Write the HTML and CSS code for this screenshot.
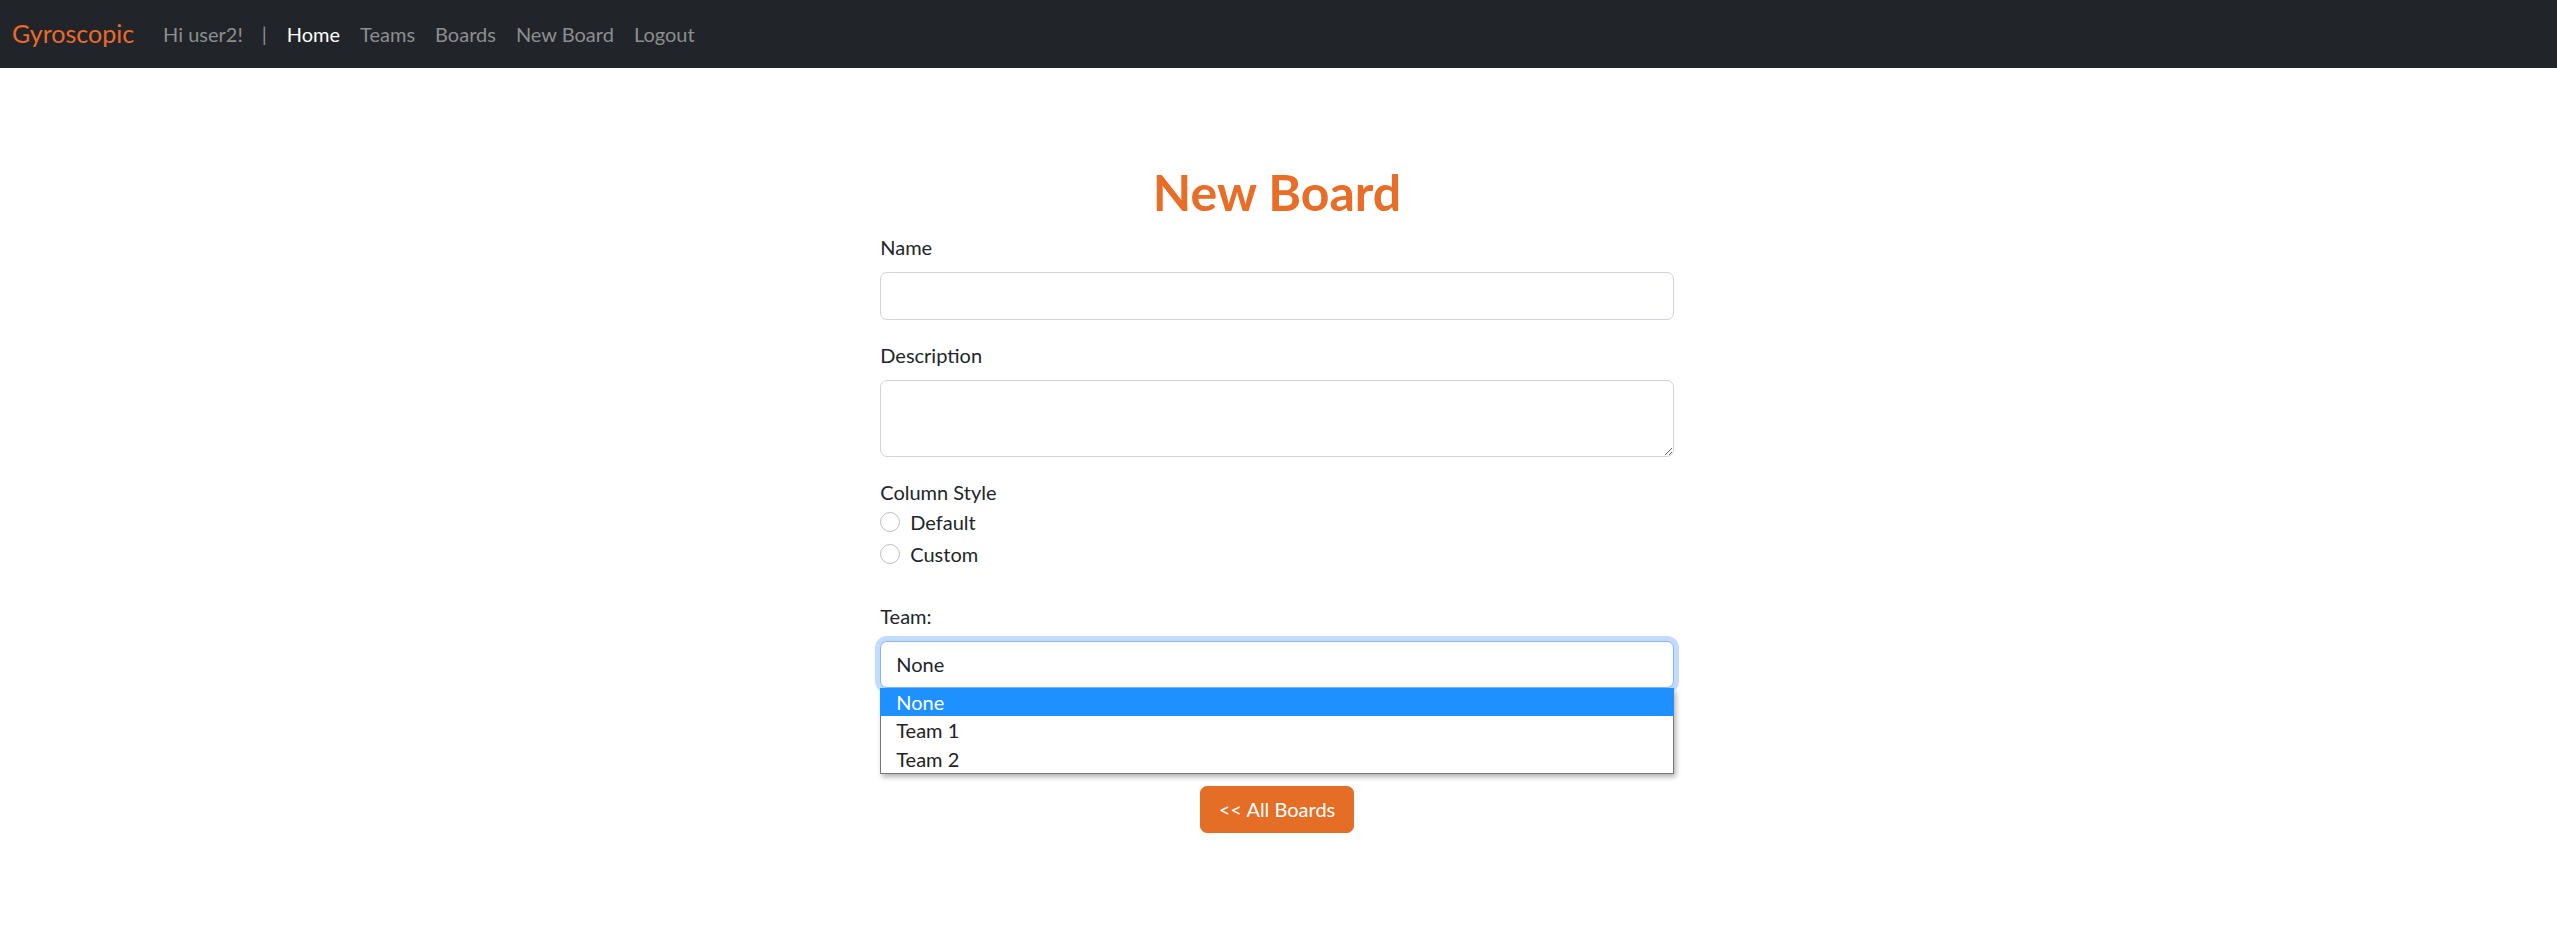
FILE: index.html
```html
<!DOCTYPE html>
<html lang="en">
<head>
<meta charset="utf-8">
<title>New Board</title>
<link rel="stylesheet" href="styles.css">
</head>
<body>
<nav class="navbar">
  <a class="brand" href="#">Gyroscopic</a>
  <span class="nav-text">Hi user2!</span>
  <span class="nav-text nav-sep">|</span>
  <a class="nav-link active" href="#">Home</a>
  <a class="nav-link" href="#">Teams</a>
  <a class="nav-link" href="#">Boards</a>
  <a class="nav-link" href="#">New Board</a>
  <a class="nav-link" href="#">Logout</a>
</nav>
<main class="page">
  <h1 class="title">New Board</h1>
  <form class="board-form">
    <div class="field">
      <label class="label" for="name">Name</label>
      <input class="control" id="name" type="text">
    </div>
    <div class="field">
      <label class="label" for="desc">Description</label>
      <textarea class="control textarea" id="desc"></textarea>
    </div>
    <div class="field-group">
      <div class="label label-tight">Column Style</div>
      <label class="check"><span class="radio"></span><span>Default</span></label>
      <label class="check"><span class="radio"></span><span>Custom</span></label>
    </div>
    <div class="field field-team">
      <label class="label">Team:</label>
      <div class="select-wrap">
        <div class="control select">None</div>
        <ul class="dropdown">
          <li class="option selected">None</li>
          <li class="option">Team 1</li>
          <li class="option">Team 2</li>
        </ul>
      </div>
    </div>
    <div class="actions">
      <a class="btn" href="#">&lt;&lt; All Boards</a>
    </div>
  </form>
</main>
</body>
</html>
```
FILE: styles.css
```css
* { box-sizing: border-box; }
body {
  margin: 0;
  font-family: "Lato", "Open Sans", sans-serif;
  font-size: 20px;
  line-height: 1.5;
  color: #212529;
  background: #fff;
}
.navbar {
  height: 68px;
  background: #212529;
  display: flex;
  align-items: center;
  padding: 0 12px;
}
.brand {
  color: #eb6a2b;
  font-size: 25px;
  text-decoration: none;
  margin-right: 19px;
}
.nav-text {
  color: #8c8e91;
  padding: 0 10px;
}
.nav-sep { padding: 0 10px 0 9px; }
.nav-link {
  color: #8c8e91;
  text-decoration: none;
  padding: 0 10px;
}
.nav-link.active { color: #fff; }
.page {
  width: 796.5px;
  padding-right: 3px;
  margin: 94px auto 0;
}
.title {
  margin: 0 0 10px;
  text-align: center;
  font-size: 50px;
  line-height: 60px;
  font-weight: 700;
  color: #e86d27;
}
.field { margin-bottom: 20px; }
.label {
  display: block;
  line-height: 30px;
  margin-bottom: 10px;
}
.label-tight { margin-bottom: 0; }
.control {
  display: block;
  width: 100%;
  height: 47.5px;
  padding: 7.5px 15px;
  font: inherit;
  color: #212529;
  background: #fff;
  border: 1px solid #ced4da;
  border-radius: 7px;
}
.textarea {
  height: 77px;
  resize: vertical;
}
.field-group { margin-bottom: 31.5px; }
.check {
  display: flex;
  align-items: flex-start;
  min-height: 30px;
  margin-bottom: 2.5px;
  line-height: 30px;
}
.radio {
  width: 20px;
  height: 20px;
  margin-top: 5px;
  margin-right: 10px;
  border: 1px solid rgba(0,0,0,.25);
  border-radius: 50%;
  flex: none;
}
.field-team { margin-bottom: 97.5px; }
.select-wrap { position: relative; }
.select {
  border-color: #86b7fe;
  box-shadow: 0 0 0 5px rgba(13,110,253,.25);
}
.dropdown {
  position: absolute;
  top: 100%;
  left: 0;
  right: 0;
  margin: 0;
  padding: 0;
  list-style: none;
  background: #fff;
  border: 1px solid #767676;
  border-top: none;
  box-shadow: 2px 3px 5px rgba(0,0,0,.3);
  z-index: 2;
}
.option {
  height: 28.3px;
  line-height: 28.3px;
  padding-left: 15px;
  color: #222;
}
.option.selected {
  background: #1e90ff;
  color: #fff;
  margin: 0 -1px;
  padding-left: 16px;
}
.actions {
  display: flex;
  justify-content: center;
}
.btn {
  display: inline-block;
  padding: 7.5px 18px;
  line-height: 30px;
  color: #fff;
  background: #e56e26;
  border: 1px solid #e56e26;
  border-radius: 7px;
  text-decoration: none;
}
```
